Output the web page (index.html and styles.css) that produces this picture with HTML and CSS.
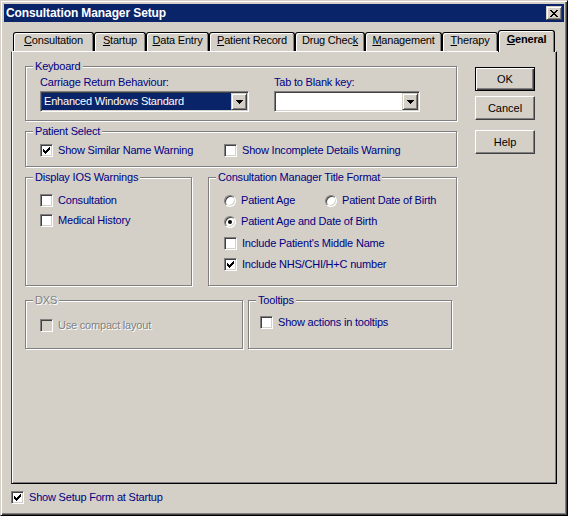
FILE: index.html
```html
<!DOCTYPE html>
<html>
<head>
<meta charset="utf-8">
<title>Consultation Manager Setup</title>
<link rel="stylesheet" href="styles.css">
</head>
<body>
<div class="window">
  <div class="titlebar">
    <span class="title">Consultation Manager Setup</span>
    <span class="closebtn"><svg class="xglyph" width="8" height="7" viewBox="0 0 8 7"><path d="M0 0h2v1h-2zM6 0h2v1h-2zM1 1h2v1h-2zM5 1h2v1h-2zM2 2h4v1h-4zM3 3h2v1h-2zM2 4h4v1h-4zM1 5h2v1h-2zM5 5h2v1h-2zM0 6h2v1h-2zM6 6h2v1h-2z"/></svg></span>
  </div>

  <div class="tabs">
    <div class="tab w1"><u>C</u>onsultation</div>
    <div class="tab w2"><u>S</u>tartup</div>
    <div class="tab w3"><u>D</u>ata Entry</div>
    <div class="tab w4"><u>P</u>atient Record</div>
    <div class="tab w5">Drug Chec<u>k</u></div>
    <div class="tab w6"><u>M</u>anagement</div>
    <div class="tab w7"><u>T</u>herapy</div>
    <div class="tab sel"><u>G</u>eneral</div>
  </div>

  <div class="panel">
    <div class="leftcol">
      <fieldset class="group g-kb">
        <legend>Keyboard</legend>
        <div class="kb">
          <div class="kb-col1">
            <div class="lbl">Carriage Return Behaviour:</div>
            <div class="combo c1">
              <span class="combo-text hl">Enhanced Windows Standard</span>
              <span class="dd"><svg width="7" height="4" viewBox="0 0 7 4"><path d="M0 0h7v1h-1v1h-1v1h-1v1h-1v-1h-1v-1h-1v-1h-1z"/></svg></span>
            </div>
          </div>
          <div class="kb-col2">
            <div class="lbl">Tab to Blank key:</div>
            <div class="combo c2">
              <span class="combo-text"></span>
              <span class="dd"><svg width="7" height="4" viewBox="0 0 7 4"><path d="M0 0h7v1h-1v1h-1v1h-1v1h-1v-1h-1v-1h-1v-1h-1z"/></svg></span>
            </div>
          </div>
        </div>
      </fieldset>

      <fieldset class="group g-ps">
        <legend>Patient Select</legend>
        <div class="ps">
          <div class="opt ps1"><span class="cb"><svg width="7" height="7" viewBox="0 0 7 7"><path d="M6 0h1v1h-1zM5 1h2v1h-2zM0 2h1v1h-1zM4 2h3v1h-3zM0 3h2v1h-2zM3 3h3v1h-3zM0 4h5v1h-5zM1 5h3v1h-3zM2 6h1v1h-1z"/></svg></span><span class="txt">Show Similar Name Warning</span></div>
          <div class="opt"><span class="cb"></span><span class="txt">Show Incomplete Details Warning</span></div>
        </div>
      </fieldset>

      <div class="row2">
        <fieldset class="group g-ios">
          <legend>Display IOS Warnings</legend>
          <div class="ios">
            <div class="opt"><span class="cb"></span><span class="txt">Consultation</span></div>
            <div class="opt r2"><span class="cb"></span><span class="txt">Medical History</span></div>
          </div>
        </fieldset>
        <fieldset class="group g-tf">
          <legend>Consultation Manager Title Format</legend>
          <div class="tf">
            <div class="tfrow">
              <div class="opt tf1"><span class="rb"></span><span class="txt">Patient Age</span></div>
              <div class="opt"><span class="rb"></span><span class="txt">Patient Date of Birth</span></div>
            </div>
            <div class="opt tfr2"><span class="rb on"></span><span class="txt">Patient Age and Date of Birth</span></div>
            <div class="opt tfr3"><span class="cb"></span><span class="txt">Include Patient's Middle Name</span></div>
            <div class="opt tfr4"><span class="cb"><svg width="7" height="7" viewBox="0 0 7 7"><path d="M6 0h1v1h-1zM5 1h2v1h-2zM0 2h1v1h-1zM4 2h3v1h-3zM0 3h2v1h-2zM3 3h3v1h-3zM0 4h5v1h-5zM1 5h3v1h-3zM2 6h1v1h-1z"/></svg></span><span class="txt">Include NHS/CHI/H+C number</span></div>
          </div>
        </fieldset>
      </div>

      <div class="row3">
        <fieldset class="group g-dxs disabled">
          <legend>DXS</legend>
          <div class="dxs">
            <div class="opt"><span class="cb dis"></span><span class="txt">Use compact layout</span></div>
          </div>
        </fieldset>
        <fieldset class="group g-tt">
          <legend>Tooltips</legend>
          <div class="tt">
            <div class="opt"><span class="cb"></span><span class="txt">Show actions in tooltips</span></div>
          </div>
        </fieldset>
      </div>
    </div>

    <div class="buttons">
      <div class="btn default">OK</div>
      <div class="btn cancel">Cancel</div>
      <div class="btn help">Help</div>
    </div>
  </div>

  <div class="footer">
    <div class="opt"><span class="cb"><svg width="7" height="7" viewBox="0 0 7 7"><path d="M6 0h1v1h-1zM5 1h2v1h-2zM0 2h1v1h-1zM4 2h3v1h-3zM0 3h2v1h-2zM3 3h3v1h-3zM0 4h5v1h-5zM1 5h3v1h-3zM2 6h1v1h-1z"/></svg></span><span class="txt">Show Setup Form at Startup</span></div>
  </div>
</div>
</body>
</html>
```

FILE: styles.css
```css
* { box-sizing: border-box; }
html, body { margin: 0; padding: 0; }
body {
  width: 568px;
  height: 516px;
  overflow: hidden;
  background: #d4d0c8;
  font-family: "Liberation Sans", Arial, sans-serif;
  font-size: 11px;
  letter-spacing: -0.2px;
  color: #000080;
}

.window {
  width: 568px;
  height: 516px;
  background: #d4d0c8;
  border: 1px solid;
  border-color: #d4d0c8 #000 #000 #d4d0c8;
  box-shadow: inset 1px 1px 0 #fff, inset -1px -1px 0 #404040, inset -2px -2px 0 #808080;
  padding: 3px;
}

/* title bar */
.titlebar {
  height: 18px;
  background: #0a246a;
  display: flex;
  align-items: center;
  justify-content: space-between;
  padding: 0 2px;
  color: #fff;
  font-weight: bold;
  font-size: 12px;
  line-height: 18px;
  letter-spacing: -0.1px;
}
.closebtn {
  width: 16px;
  height: 14px;
  background: #d4d0c8;
  border: 1px solid;
  border-color: #d4d0c8 #404040 #404040 #d4d0c8;
  box-shadow: inset 1px 1px 0 #fff, inset -1px -1px 0 #808080;
  display: flex;
  align-items: center;
  justify-content: center;
}
.xglyph { display: block; fill: #000; shape-rendering: crispEdges; }

/* tabs */
.tabs {
  display: flex;
  align-items: flex-end;
  height: 21px;
  margin-top: 8px;
  padding-left: 9px;
}
.tab {
  height: 19px;
  border: 1px solid #000;
  border-bottom: 0;
  border-radius: 3px 3px 0 0;
  box-shadow: inset 1px 1px 0 #fff, inset -1px 0 0 #808080;
  background: #d4d0c8;
  color: #000;
  text-align: center;
  line-height: 13px;
  padding-top: 1px;
  white-space: nowrap;
}
.tab u { text-underline-offset: 1px; }
.w1 { width: 81px; }
.w2 { width: 52px; }
.w3 { width: 63px; }
.w4 { width: 86px; }
.w5 { width: 70px; }
.w6 { width: 77px; }
.w7 { width: 56px; }
.tab.sel {
  width: 57px;
  height: 22px;
  margin-bottom: -1px;
  padding-top: 2px;
  font-weight: bold;
  position: relative;
  z-index: 1;
}

/* panel */
.panel {
  width: 546px;
  height: 433px;
  margin-left: 7px;
  border: 1px solid;
  border-color: #fff #000 #000 #404040;
  box-shadow: inset 1px 0 0 #fff, inset -1px -1px 0 #808080;
  display: flex;
  align-items: flex-start;
  padding: 8px 0 0 13px;
}
.leftcol { width: 432px; }

/* group boxes */
.group {
  margin: 0;
  padding: 0;
  min-width: 0;
  border: 1px solid #808080;
  box-shadow: inset 1px 1px 0 #fff, 1px 1px 0 #fff;
}
.group > legend {
  margin-left: 7px;
  padding: 0 2px;
  line-height: 13px;
  background: #d4d0c8;
  color: #000080;
}
.group.g-kb, .group.g-ps { width: 432px; }
.group.g-ps { margin-top: 4px; }

.kb {
  display: flex;
  padding: 3px 0 8px 14px;
}
.kb-col1 { width: 209px; }
.kb-col2 { margin-left: 25px; }
.lbl { line-height: 13px; height: 13px; white-space: nowrap; }
.combo {
  margin-top: 2px;
  height: 21px;
  background: #fff;
  border: 1px solid;
  border-color: #808080 #fff #fff #808080;
  box-shadow: inset 1px 1px 0 #404040, inset -1px -1px 0 #d4d0c8;
  padding: 1px;
  display: flex;
}
.c1 { width: 209px; }
.c2 { width: 146px; }
.combo-text {
  flex: 1;
  height: 17px;
  line-height: 17px;
  padding-left: 2px;
  white-space: nowrap;
  overflow: hidden;
}
.combo-text.hl { background: #0a246a; color: #fff; }
.dd {
  width: 16px;
  height: 17px;
  background: #d4d0c8;
  border: 1px solid;
  border-color: #d4d0c8 #404040 #404040 #d4d0c8;
  box-shadow: inset 1px 1px 0 #fff, inset -1px -1px 0 #808080;
  display: flex;
  align-items: center;
  justify-content: center;
}
.dd svg { display: block; fill: #000; shape-rendering: crispEdges; }

.ps {
  display: flex;
  padding: 6px 0 9px 14px;
}
.ps1 { width: 184px; }

/* options */
.opt {
  display: flex;
  align-items: flex-start;
  height: 13px;
  line-height: 13px;
  white-space: nowrap;
}
.opt .txt { margin-left: 5px; }
.cb {
  width: 13px;
  height: 13px;
  flex: none;
  background: #fff;
  border: 1px solid;
  border-color: #808080 #fff #fff #808080;
  box-shadow: inset 1px 1px 0 #404040, inset -1px -1px 0 #d4d0c8;
}
.cb svg { display: block; margin: 2px 0 0 2px; fill: #000; shape-rendering: crispEdges; }
.cb.dis { background: #d4d0c8; }
.rb {
  width: 12px;
  height: 12px;
  flex: none;
  margin-top: 1px;
  border-radius: 50%;
  background: #fff;
  border: 1px solid;
  border-color: #808080 #fff #fff #808080;
  box-shadow: inset 1px 1px 0 #404040, inset -1px -1px 0 #d4d0c8;
  display: flex;
  align-items: center;
  justify-content: center;
}
.rb.on::after {
  content: "";
  width: 4px;
  height: 4px;
  border-radius: 50%;
  background: #000;
}

.row2 { display: flex; margin-top: 4px; }
.group.g-ios { width: 167px; }
.group.g-tf { width: 249px; margin-left: 16px; }
.ios { padding: 10px 0 58px 14px; }
.ios .r2 { margin-top: 7px; }
.tf { padding: 10px 0 14px 15px; }
.tfrow { display: flex; }
.tf1 { width: 101px; }
.tfr2 { margin-top: 8px; }
.tfr3 { margin-top: 9px; }
.tfr4 { margin-top: 8px; }

.row3 { display: flex; margin-top: 8px; }
.group.g-dxs { width: 218px; }
.group.g-tt { width: 204px; margin-left: 5px; }
.dxs { padding: 12px 0 16px 14px; }
.tt { padding: 9px 0 19px 11px; }
.group.disabled > legend, .disabled .txt {
  color: #808080;
  text-shadow: 1px 1px 0 #fff;
}

/* buttons */
.buttons {
  margin-left: 18px;
  margin-top: 7px;
  display: flex;
  flex-direction: column;
}
.btn {
  width: 60px;
  height: 24px;
  background: #d4d0c8;
  color: #000;
  text-align: center;
  line-height: 22px;
  border: 1px solid;
  border-color: #fff #404040 #404040 #fff;
  box-shadow: inset -1px -1px 0 #808080;
  letter-spacing: 0;
}
.btn.default {
  border-color: #000;
  box-shadow: inset 1px 1px 0 #fff, inset -1px -1px 0 #404040, inset -2px -2px 0 #808080;
}
.btn.cancel { margin-top: 5px; }
.btn.help { margin-top: 10px; }

/* footer */
.footer { padding: 7px 0 0 7px; }
```
